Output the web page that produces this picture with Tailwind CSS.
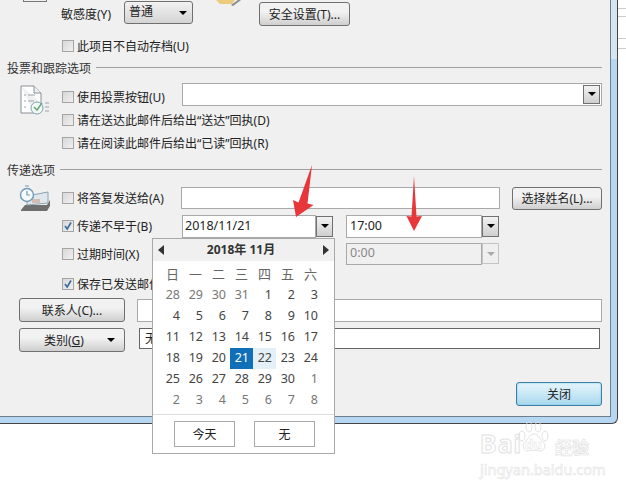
<!DOCTYPE html>
<html lang="zh-CN">
<head>
    <meta charset="UTF-8">
    <title>属性</title>
    <script src="https://cdn.jsdelivr.net/npm/@tailwindcss/browser@4"></script>
</head>
<body>
<div class="relative w-[626px] h-[490px] overflow-hidden bg-white text-[12px] leading-none text-[#222] font-['Noto_Sans','Noto_Sans_CJK_SC',sans-serif]">

    <!-- window frame -->
    <div class="w-[618px] h-[424px] pr-[6px] pb-[6px] bg-linear-to-b from-[#d6e5f1] from-[14%] to-[#b6d6f2] to-[14%] border-r border-b border-[#444] rounded-br-[6px]">
        <div class="h-full pl-[7px] pr-[8px] bg-[#f0f0f0] border-r border-b border-[#6d7f8e]">

            <!-- sensitivity -->
            <div class="flex items-start h-[26px]">
                <div class="w-[54px] h-[26px] -mt-px">
                    <div class="ml-[16px] w-[24px] h-[3px] border-x border-b border-[#777]"></div>
                </div>
                <span class="w-[63px] mt-[9px]">敏感度(Y)</span>
                <div class="flex items-center justify-between w-[69px] h-[23px] mt-px pl-[4px] pr-[5px] rounded-[3px] border border-[#707070] bg-linear-to-b from-[#f2f2f2] to-[#d4d4d4]">
                    <span class="pb-[2px]">普通</span>
                    <span class="w-0 h-0 border-x-[4px] border-t-[4px] border-x-transparent border-t-black"></span>
                </div>
                <svg class="ml-[23px]" width="28" height="6" viewBox="0 0 28 6">
                    <path d="M0 0h19l-3 4H4z" fill="#eccb7c"/>
                    <path d="M15 5l7-5h3l-8 6z" fill="#888"/>
                </svg>
                <button class="w-[91px] h-[24px] ml-[15px] mt-[2px] pt-[2px] rounded-[3px] border border-[#707070] bg-linear-to-b from-[#f2f2f2] from-40% to-[#cfcfcf]">安全设置(T)...</button>
            </div>

            <div class="flex items-center h-[20px] mt-[10px] ml-[55px]">
                <span class="w-[12px] h-[12px] border border-[#a5a5a5] bg-linear-to-br from-[#d8d8d8] to-[#f0f0f0] mr-[3px]"></span>
                <span class="pt-[2px]">此项目不自动存档(U)</span>
            </div>

            <!-- voting -->
            <div class="flex items-center gap-[5px] h-[18px] mt-[2px] text-[#333]">
                <span class="pt-[4px]">投票和跟踪选项</span>
                <div class="flex-1 border-t border-[#a0a0a0]"></div>
            </div>
            <div class="flex mt-[9px]">
                <div class="w-[55px] shrink-0">
                    <svg class="ml-[13px]" width="31" height="31" viewBox="0 0 31 31" fill="none">
                        <path d="M1 1h13l7 7v10M1 1v27h13" stroke="#8a8f94" fill="#fff"/>
                        <path d="M14 1v7h7" stroke="#8a8f94" fill="#eef1f3"/>
                        <path d="M4 10h2M4 16h2M4 22h2M8 10h7M8 16h6" stroke="#9aa3aa"/>
                        <circle cx="17" cy="23" r="6" stroke="#7fa6ad" fill="#f3f7f5"/>
                        <path d="M14 22l3 3 5-7" stroke="#67ad80" stroke-width="1.6"/>
                        <path d="M25 18h4M25 22h4M25 26h4" stroke="#9aa3aa"/>
                    </svg>
                </div>
                <div class="flex-1">
                    <div class="flex items-center h-[23px]">
                        <span class="w-[12px] h-[12px] border border-[#a5a5a5] bg-linear-to-br from-[#d8d8d8] to-[#f0f0f0] mr-[3px]"></span>
                        <span class="w-[105px] pt-[2px]">使用投票按钮(U)</span>
                        <div class="flex items-center justify-end flex-1 h-[23px] -mt-[5px] pr-px bg-white border border-[#a9a9a9]">
                            <span class="flex items-center justify-center w-[17px] h-[19px] border border-[#707070] bg-linear-to-b from-[#f2f2f2] to-[#cfcfcf]">
                                <span class="w-0 h-0 border-x-[4px] border-t-[4px] border-x-transparent border-t-black"></span>
                            </span>
                        </div>
                    </div>
                    <div class="flex items-center h-[23px]">
                        <span class="w-[12px] h-[12px] border border-[#a5a5a5] bg-linear-to-br from-[#d8d8d8] to-[#f0f0f0] mr-[3px]"></span>
                        <span class="pt-[2px]">请在送达此邮件后给出“送达”回执(D)</span>
                    </div>
                    <div class="flex items-center h-[23px]">
                        <span class="w-[12px] h-[12px] border border-[#a5a5a5] bg-linear-to-br from-[#d8d8d8] to-[#f0f0f0] mr-[3px]"></span>
                        <span class="pt-[2px]">请在阅读此邮件后给出“已读”回执(R)</span>
                    </div>
                </div>
            </div>

            <!-- delivery -->
            <div class="flex items-center gap-[5px] h-[18px] mt-[6px] text-[#333]">
                <span class="pt-[3px]">传递选项</span>
                <div class="flex-1 border-t border-[#a0a0a0]"></div>
            </div>
            <div class="flex mt-[6px]">
                <div class="w-[55px] shrink-0">
                    <svg class="ml-[11px]" width="34" height="29" viewBox="0 0 34 29" fill="none">
                        <path d="M3 26l4-5h22l3-5v6l-3 5H3z" fill="#6e6e6e"/>
                        <path d="M9 12l21-4v11l-21 2z" fill="#dfe7ec" stroke="#8ca3b1"/>
                        <path d="M14 16h8M14 18h8" stroke="#c98f7a"/>
                        <circle cx="9" cy="11" r="6.500" fill="#f6fafc" stroke="#6f99b5" stroke-width="1.4"/>
                        <path d="M9 7v4h3M7 2h4" stroke="#6f99b5" stroke-width="1.2"/>
                    </svg>
                </div>
                <div class="flex-1">
                    <div class="flex items-center h-[28px]">
                        <span class="w-[12px] h-[12px] border border-[#a5a5a5] bg-linear-to-br from-[#d8d8d8] to-[#f0f0f0] mr-[3px]"></span>
                        <span class="w-[104px] pt-[2px]">将答复发送给(A)</span>
                        <div class="w-[319px] h-[22px] bg-white border border-[#a9a9a9]"></div>
                        <button class="w-[90px] h-[23px] ml-[12px] pt-[2px] rounded-[3px] border border-[#707070] bg-linear-to-b from-[#f2f2f2] from-40% to-[#cfcfcf]">选择姓名(L)...</button>
                    </div>
                    <div class="flex items-center h-[28px]">
                        <span class="flex items-center justify-center w-[12px] h-[12px] border border-[#a5a5a5] bg-linear-to-br from-[#d8d8d8] to-[#f0f0f0] mr-[3px]">
                            <svg width="10" height="10" viewBox="0 0 10 10" fill="none"><path d="M2 5l2.200 3L8 1.500" stroke="#3d6f9f" stroke-width="1.7"/></svg>
                        </span>
                        <span class="w-[105px] pt-[2px]">传递不早于(B)</span>
                        <div class="flex items-center w-[134px] h-[23px] pl-[2px] bg-white border border-[#a9a9a9] text-[12.5px]">2018/11/21</div>
                        <span class="flex items-center justify-center w-[17px] h-[21px] border border-[#707070] bg-linear-to-b from-[#f2f2f2] to-[#cfcfcf]">
                            <span class="w-0 h-0 border-x-[4px] border-t-[4px] border-x-transparent border-t-black"></span>
                        </span>
                        <div class="flex items-center w-[136px] h-[23px] ml-[13px] pl-[3px] bg-white border border-[#a9a9a9] text-[12.5px]">17:00</div>
                        <span class="flex items-center justify-center w-[17px] h-[21px] border border-[#707070] bg-linear-to-b from-[#f2f2f2] to-[#cfcfcf]">
                            <span class="w-0 h-0 border-x-[4px] border-t-[4px] border-x-transparent border-t-black"></span>
                        </span>
                    </div>
                    <div class="flex items-center h-[27px]">
                        <span class="w-[12px] h-[12px] border border-[#a5a5a5] bg-linear-to-br from-[#d8d8d8] to-[#f0f0f0] mr-[3px]"></span>
                        <span class="w-[269px] pt-[2px]">过期时间(X)</span>
                        <div class="flex items-center w-[136px] h-[22px] pl-[3px] bg-[#f0f0f0] border border-[#a9a9a9] text-[#888] text-[12.5px]">0:00</div>
                        <span class="flex items-center justify-center w-[17px] h-[21px] border border-[#c4c4c4] bg-[#efefef]">
                            <span class="w-0 h-0 border-x-[4px] border-t-[4px] border-x-transparent border-t-[#aaa]"></span>
                        </span>
                    </div>
                    <div class="flex items-center h-[20px] mt-[7px]">
                        <span class="flex items-center justify-center w-[12px] h-[12px] border border-[#a5a5a5] bg-linear-to-br from-[#d8d8d8] to-[#f0f0f0] mr-[3px]">
                            <svg width="10" height="10" viewBox="0 0 10 10" fill="none"><path d="M2 5l2.200 3L8 1.500" stroke="#3d6f9f" stroke-width="1.7"/></svg>
                        </span>
                        <span class="pt-[2px]">保存已发送邮件</span>
                    </div>
                </div>
            </div>

            <!-- contacts -->
            <div class="flex items-center h-[24px] mt-[4px] ml-[12px]">
                <button class="w-[106px] h-[24px] pt-[2px] rounded-[3px] border border-[#707070] bg-linear-to-b from-[#f2f2f2] from-40% to-[#cfcfcf]">联系人(C)...</button>
                <div class="flex-1 h-[23px] ml-[12px] bg-white border border-[#a9a9a9]"></div>
            </div>
            <div class="flex items-center h-[24px] mt-[6px] ml-[12px]">
                <button class="flex items-center w-[106px] h-[24px] pl-[24px] pr-[9px] rounded-[3px] border border-[#707070] bg-linear-to-b from-[#f2f2f2] from-40% to-[#cfcfcf]">
                    <span class="pt-[2px]">类别(<span class="underline">G</span>)</span>
                    <span class="w-0 h-0 ml-auto border-x-[4px] border-t-[4px] border-x-transparent border-t-black"></span>
                </button>
                <div class="flex items-center flex-1 h-[21px] ml-[14px] mr-[2px] -mt-[3px] pl-[5px] bg-white border border-[#666]">无</div>
            </div>

            <div class="flex justify-end mt-[30px]">
                <button class="w-[86px] h-[24px] pt-[2px] rounded-[3px] border border-[#3c7fa5] bg-linear-to-b from-[#e6f5fc] to-[#a9d9ef] shadow-[inset_0_0_2px_#6cc0e4]">关闭</button>
            </div>
        </div>
    </div>

    <!-- window behind -->
    <div class="absolute left-[618px] top-0 w-[8px] h-[50px]">
        <div class="h-[9px] border-b border-[#ccc]"></div>
        <div class="h-[8px] border-b border-[#ccc]"></div>
        <div class="h-[22px] border-b border-[#ccc]"></div>
        <div class="h-[10px] border-b border-[#ccc]"></div>
    </div>

    <!-- date picker -->
    <div class="absolute left-[152px] top-[238px] w-[183px] h-[216px] bg-white border border-[#a9a9a9]">
        <div class="flex items-center justify-between h-[22px] px-[5px] bg-[#f0f0f0]">
            <span class="w-0 h-0 border-y-[5px] border-r-[6px] border-y-transparent border-r-[#333]"></span>
            <span class="mr-[5px] font-bold text-[#333]">2018年 11月</span>
            <span class="w-0 h-0 border-y-[5px] border-l-[6px] border-y-transparent border-l-[#333]"></span>
        </div>
        <div class="w-[161px] ml-[8px] mt-[2px] grid grid-cols-7 text-[13px] text-[#666]">
            <span class="h-[22px] flex items-center justify-center">日</span>
            <span class="h-[22px] flex items-center justify-center">一</span>
            <span class="h-[22px] flex items-center justify-center">二</span>
            <span class="h-[22px] flex items-center justify-center">三</span>
            <span class="h-[22px] flex items-center justify-center">四</span>
            <span class="h-[22px] flex items-center justify-center">五</span>
            <span class="h-[22px] flex items-center justify-center">六</span>
        </div>
        <div id="days" class="w-[161px] ml-[8px] grid grid-cols-7 auto-rows-[21px] text-[12.5px] text-[#444]"></div>
        <div class="flex gap-[19px] mt-[3px] pt-[6px] pl-[21px] border-t border-[#ddd]">
            <button class="w-[61px] h-[26px] pt-[2px] bg-white border border-[#a9a9a9]">今天</button>
            <button class="w-[61px] h-[26px] pt-[2px] bg-white border border-[#a9a9a9]">无</button>
        </div>
    </div>

    <!-- red arrows -->
    <svg class="absolute left-0 top-0 pointer-events-none" width="626" height="490" viewBox="0 0 626 490">
        <path d="M296 217l-3-17 5.500 2.500L312 165l-4.500 38.500 6 1.500z" fill="#e8373a"/>
        <path d="M414 231l-7.500-15 5 0.500L414 176l2.500 40.500 5.500-0.500z" fill="#e8373a"/>
    </svg>

    <!-- watermark -->
    <div class="absolute left-[480px] top-[420px] w-[120px] h-[60px] text-white font-bold [-webkit-text-stroke:1px_#e2e2e2]">
        <div class="flex items-end h-[36px]">
            <span class="w-[36px] text-[25px] tracking-[1px]">Bai</span>
            <div class="relative w-[36px] h-[36px] mt-[3px]">
                <svg width="36" height="36" viewBox="0 0 36 36" fill="none" stroke="#e2e2e2">
                    <ellipse cx="6" cy="16" rx="3" ry="5"/>
                    <ellipse cx="13" cy="7" rx="3" ry="5"/>
                    <ellipse cx="22" cy="7" rx="3" ry="5"/>
                    <ellipse cx="29" cy="16" rx="3" ry="5"/>
                    <path d="M18 14c-5 0-6 6-9 8-4 3-1 10 4 9 3-1 7-1 10 0 5 1 8-6 4-9-3-2-4-8-9-8z"/>
                </svg>
                <span class="absolute left-[9px] top-[18px] text-[13px] [-webkit-text-stroke:0.5px_#e2e2e2]">du</span>
            </div>
            <span class="ml-[3px] text-[17px] [-webkit-text-stroke:0.7px_#e2e2e2]">经验</span>
        </div>
        <div class="mt-[6px] text-[14.5px] font-normal [-webkit-text-stroke:0.5px_#dedede]">jingyan.baidu.com</div>
    </div>
</div>

<script>
    // fill the calendar grid, days outside november are greyed out
    const days = [28,29,30,31,1,2,3,4,5,6,7,8,9,10,11,12,13,14,15,16,17,18,19,20,21,22,23,24,25,26,27,28,29,30,1,2,3,4,5,6,7,8];
    const box = document.getElementById("days");
    days.forEach((d, i) => {
        const cell = document.createElement("span");
        cell.textContent = d;
        cell.className = "flex items-center justify-end pr-[4px]";
        if (i < 4 || i > 33) cell.className += " text-[#777]";
        if (i == 24) cell.className += " bg-[#0f6fb8] text-white";
        if (i == 25) cell.className += " bg-[#e3f0f8]";
        box.appendChild(cell);
    });
</script>
</body>
</html>
